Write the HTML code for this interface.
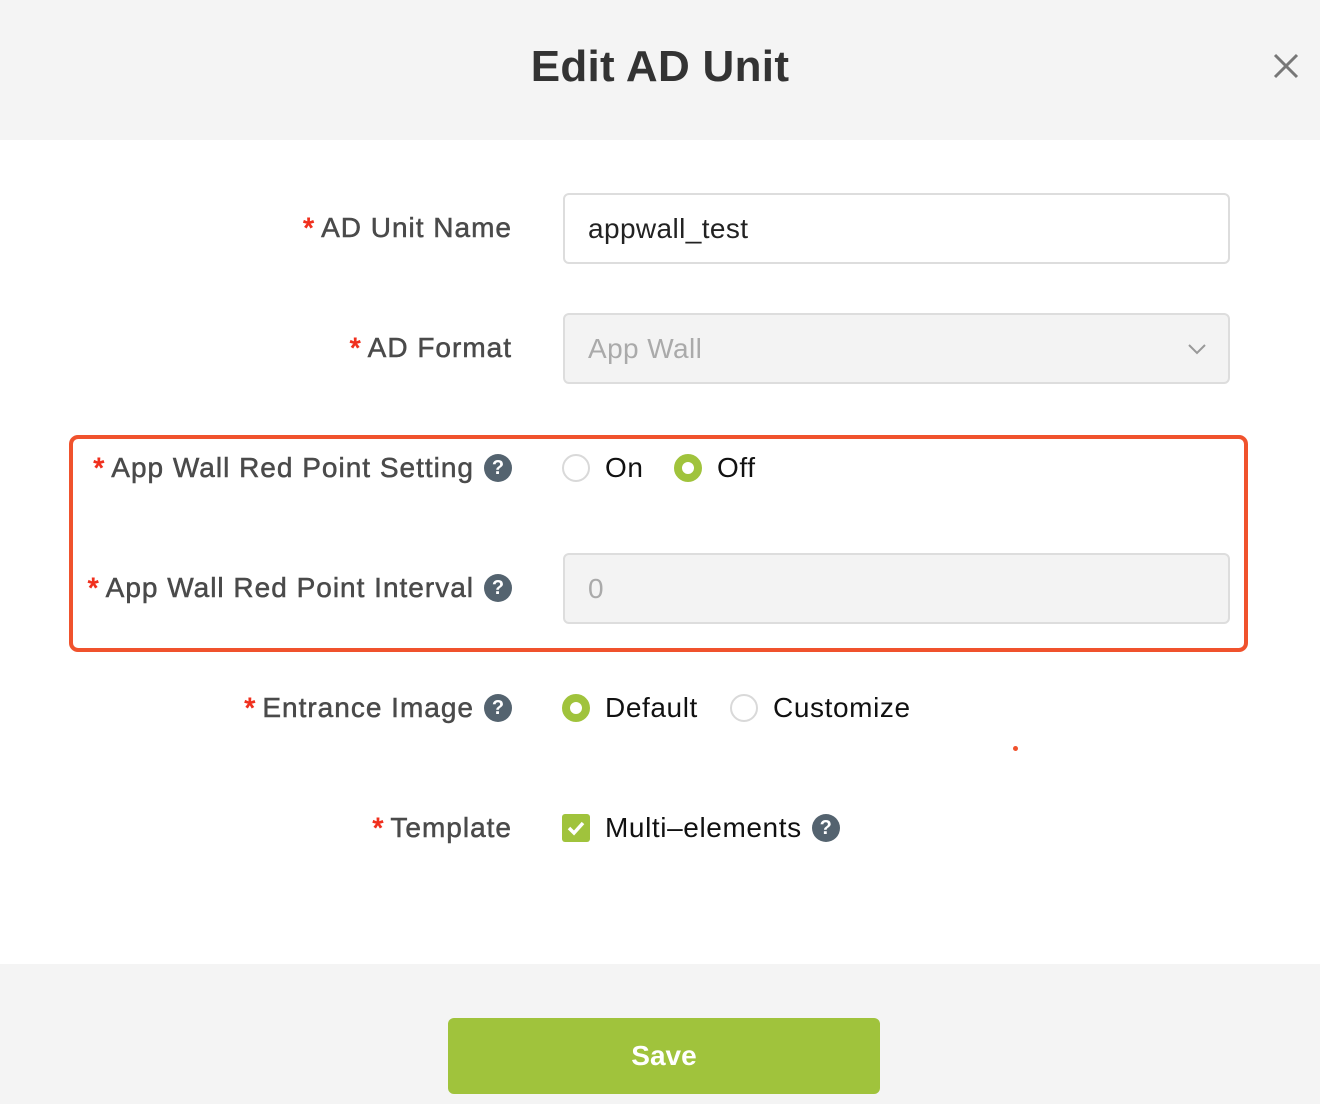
<!DOCTYPE html>
<html><head><style>
*{box-sizing:border-box;margin:0;padding:0}
body{width:1320px;height:1104px;background:#fff;font-family:"Liberation Sans",sans-serif;position:relative;overflow:hidden}
.hdr{position:absolute;left:0;top:0;width:1320px;height:140px;background:#f4f4f4}
.title{position:absolute;left:0;width:1320px;top:42px;text-align:center;font-size:44px;font-weight:bold;color:#333;letter-spacing:0.3px}
.close{position:absolute;left:1272px;top:52px}
.ftr{position:absolute;left:0;top:964px;width:1320px;height:140px;background:#f4f4f4}
.save{position:absolute;left:448px;top:1018px;width:432px;height:76px;background:#a0c33c;border-radius:6px;color:#fff;font-size:28px;font-weight:bold;text-align:center;line-height:76px}
.lbl{position:absolute;right:808px;font-size:28px;color:#4a4a4a;white-space:nowrap;display:flex;align-items:center;height:40px;letter-spacing:1px;-webkit-text-stroke:0.5px #4a4a4a}
.lbl .s{color:#f0301e;-webkit-text-stroke:1px #f0301e;margin-right:6px}
.q{display:inline-block;width:28px;height:28px;border-radius:50%;background:#54636f;color:#fff;font-size:20px;font-weight:bold;text-align:center;line-height:28px;margin-left:10px;letter-spacing:0;-webkit-text-stroke:0}
.inp{position:absolute;left:563px;width:667px;height:71px;border:2px solid #ddd;border-radius:6px;font-size:28px;padding-left:23px;line-height:67px;color:#222;letter-spacing:0.4px}
.dis{background:#f3f3f3;color:#aaa}
.opt{position:absolute;font-size:28px;color:#111;display:flex;align-items:center;height:40px;letter-spacing:0.6px}
.r{width:28px;height:28px;border-radius:50%;border:2px solid #d9d9d9;margin-right:15px;background:#fff}
.r.on{border:8px solid #a0c33c}
.box{position:absolute;left:69px;top:435px;width:1179px;height:217px;border:4px solid #f0522d;border-radius:9px}
</style></head><body>
<div class="hdr"></div>
<div class="title">Edit AD Unit</div>
<svg class="close" width="28" height="28" viewBox="0 0 28 28"><path d="M3 3L25 25M25 3L3 25" stroke="#777" stroke-width="3"/></svg>

<div class="lbl" style="top:208px"><span class="s">*</span>AD Unit Name</div>
<div class="inp" style="top:193px">appwall_test</div>

<div class="lbl" style="top:328px"><span class="s">*</span>AD Format</div>
<div class="inp dis" style="top:313px">App Wall
<svg style="position:absolute;right:22px;top:28px" width="18" height="12" viewBox="0 0 18 12"><path d="M1 2L9 10L17 2" fill="none" stroke="#999" stroke-width="2"/></svg></div>

<div class="box"></div>
<div class="lbl" style="top:448px"><span class="s">*</span>App Wall Red Point Setting<span class="q">?</span></div>
<div class="opt" style="left:562px;top:448px"><span class="r"></span>On</div>
<div class="opt" style="left:674px;top:448px"><span class="r on"></span>Off</div>

<div class="lbl" style="top:568px"><span class="s">*</span>App Wall Red Point Interval<span class="q">?</span></div>
<div class="inp dis" style="top:553px">0</div>

<div class="lbl" style="top:688px"><span class="s">*</span>Entrance Image<span class="q">?</span></div>
<div class="opt" style="left:562px;top:688px"><span class="r on"></span>Default</div>
<div class="opt" style="left:730px;top:688px"><span class="r"></span>Customize</div>
<div style="position:absolute;left:1013px;top:746px;width:5px;height:5px;border-radius:50%;background:#f0522d"></div>

<div class="lbl" style="top:808px"><span class="s">*</span>Template</div>
<div class="opt" style="left:562px;top:808px"><svg width="28" height="28" style="margin-right:15px" viewBox="0 0 28 28"><rect width="28" height="28" rx="3" fill="#a0c33c"/><path d="M7 14L12 19L21 9" fill="none" stroke="#fff" stroke-width="3.5"/></svg>Multi–elements<span class="q">?</span></div>

<div class="ftr"></div>
<div class="save">Save</div>
</body></html>
